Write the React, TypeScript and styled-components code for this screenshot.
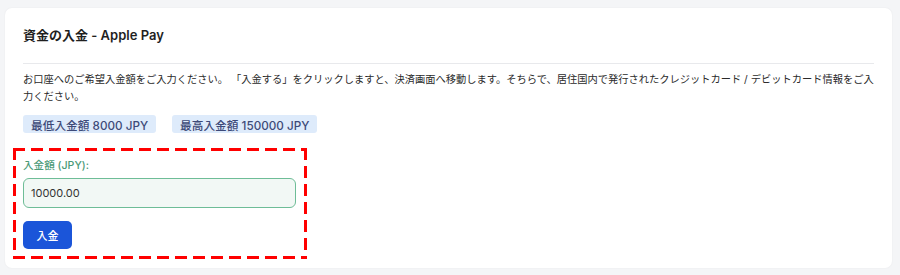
import React from "react";
import styled, { createGlobalStyle } from "styled-components";

const Global = createGlobalStyle`
  html, body { margin: 0; padding: 0; background: #f4f5f7; }
  body { font-family: Inter, "Noto Sans CJK JP", sans-serif; color: #222; }
`;

const Page = styled.div`
  padding: 8px 8px 7px 5px;
  width: 900px;
  height: 275px;
  box-sizing: border-box;
`;

const Card = styled.section`
  background: #fff;
  border-radius: 7px;
  box-shadow: 0 0 2px rgba(0, 0, 0, 0.06);
  padding: 18px 18px 8px 18px;
  height: 260px;
  box-sizing: border-box;
`;

const Title = styled.h2`
  margin: 0;
  font-size: 13px;
  font-weight: 600;
  line-height: 18px;
  color: #1f1f1f;
  padding-bottom: 19px;
  border-bottom: 1px solid #e8e9ec;
`;

const Desc = styled.p`
  margin: 7px 0 0;
  font-size: 10.25px;
  line-height: 17px;
  color: #2a2a2a;
`;

const Badges = styled.div`
  display: flex;
  gap: 16px;
  margin-top: 10px;
`;

const Badge = styled.span`
  display: inline-flex;
  align-items: center;
  height: 18px;
  padding: 0 8px;
  border-radius: 3px;
  background: #deebfb;
  color: #3d4a78;
  font-size: 11.7px;
  font-weight: 500;
`;

const dashH = "repeating-linear-gradient(90deg, #ff0000 0 12px, transparent 12px 18px)";
const dashV = "repeating-linear-gradient(180deg, #ff0000 0 12px, transparent 12px 18px)";

const Form = styled.form`
  margin: 15px 0 0 -10px;
  width: 294px;
  box-sizing: border-box;
  padding: 11px 11px 10px 10px;
  background:
    ${dashH} left top / 100% 3px no-repeat,
    ${dashH} left bottom / 100% 3px no-repeat,
    ${dashV} left top / 3px 100% no-repeat,
    ${dashV} right top / 3px 100% no-repeat;
  display: flex;
  flex-direction: column;
  align-items: flex-start;
`;

const Label = styled.label`
  font-size: 10.6px;
  line-height: 14px;
  color: #4b9a78;
  font-weight: 500;
`;

const Input = styled.input`
  margin-top: 5px;
  width: 273px;
  height: 30px;
  box-sizing: border-box;
  border: 1px solid #6ebd97;
  border-radius: 6px;
  background: #f2f8f5;
  padding: 0 7px;
  font-family: Inter, "Noto Sans CJK JP", sans-serif;
  font-size: 11px;
  color: #333;
  outline: none;
`;

const Button = styled.button`
  margin-top: 13px;
  width: 49px;
  height: 28px;
  border: none;
  border-radius: 5px;
  background: #1b55d9;
  color: #fff;
  font-family: Inter, "Noto Sans CJK JP", sans-serif;
  font-size: 11px;
  font-weight: 500;
  cursor: pointer;
`;

export default function App() {
  return (
    <>
      <Global />
      <Page>
        <Card>
          <Title>資金の入金 - Apple Pay</Title>
          <Desc>
            お口座へのご希望入金額をご入力ください。 「入金する」をクリックしますと、決済画面へ移動します。そちらで、居住国内で発行されたクレジットカード / デビットカード情報をご入力ください。
          </Desc>
          <Badges>
            <Badge>最低入金額 8000 JPY</Badge>
            <Badge>最高入金額 150000 JPY</Badge>
          </Badges>
          <Form onSubmit={(e) => e.preventDefault()}>
            <Label htmlFor="amount">入金額 (JPY):</Label>
            <Input id="amount" defaultValue="10000.00" />
            <Button type="submit">入金</Button>
          </Form>
        </Card>
      </Page>
    </>
  );
}
